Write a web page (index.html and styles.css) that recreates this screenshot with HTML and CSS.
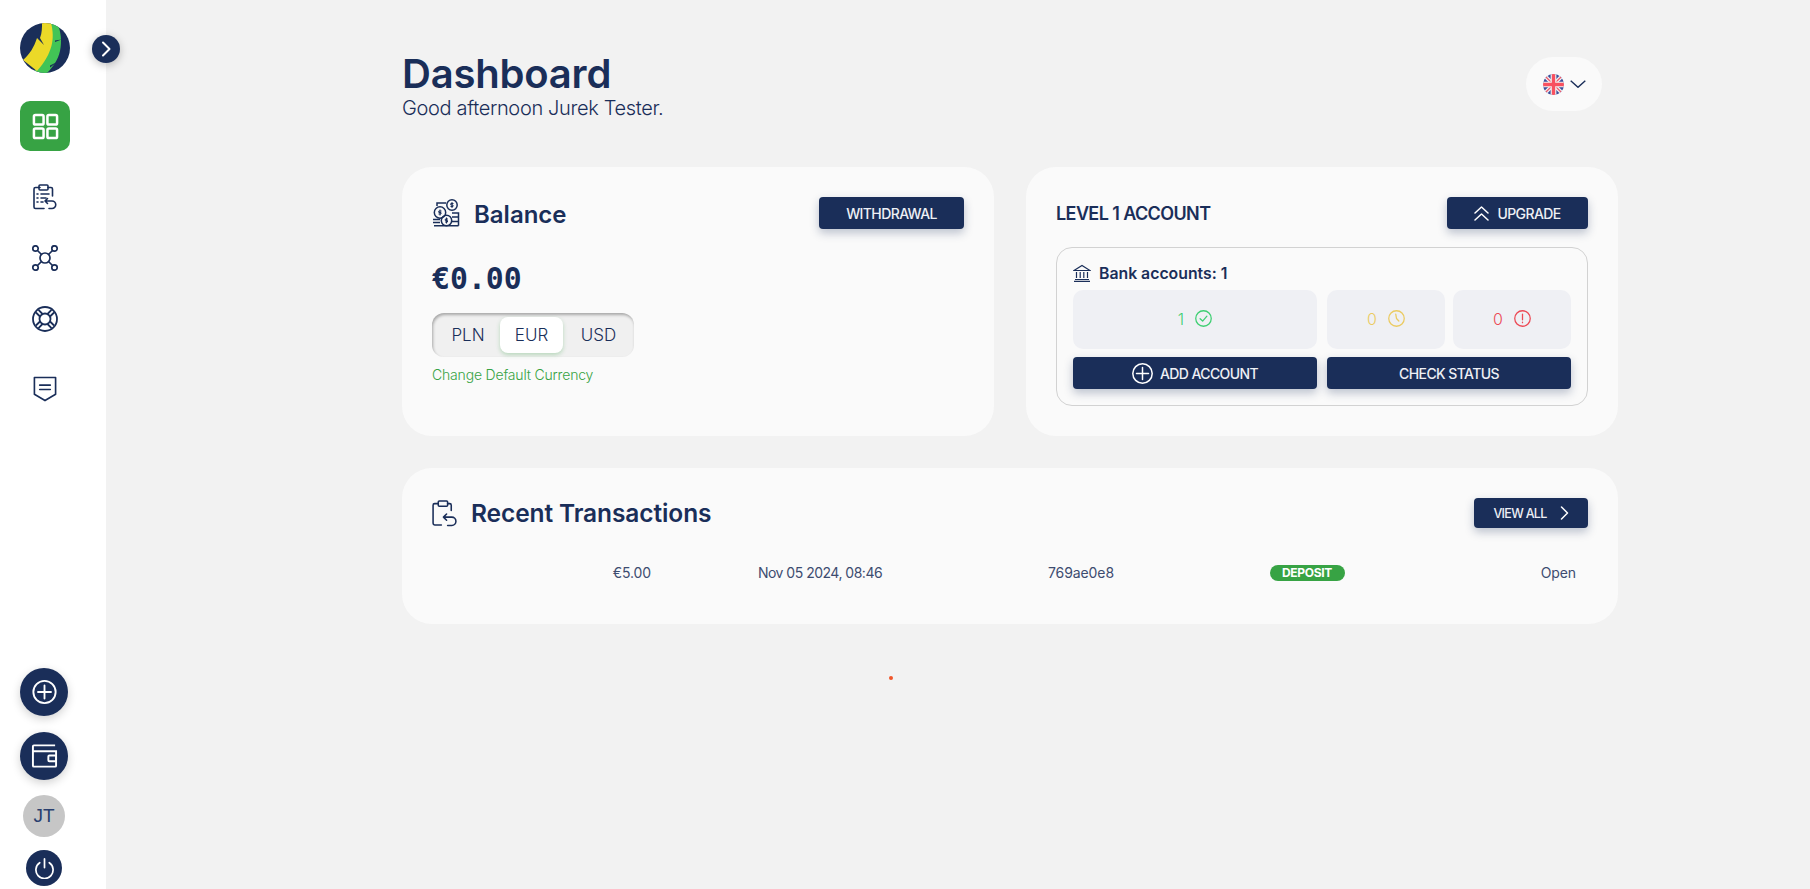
FILE: index.html
```html
<!DOCTYPE html>
<html lang="en">
<head>
<meta charset="utf-8">
<title>Dashboard</title>
<link rel="stylesheet" href="styles.css">
</head>
<body>
<div class="app">
  <aside class="sidebar">
    <svg class="logo" viewBox="0 0 50 50">
      <defs><clipPath id="logoClip"><circle cx="25" cy="25" r="25"/></clipPath></defs>
      <g clip-path="url(#logoClip)">
        <rect width="50" height="50" fill="#1a2e59"/>
        <path d="M30 0H37C41 8 42 18 40 28C38 37 33 44 27 50H14L15 47C25 36 34 22 30 0Z" fill="#42c456"/>
        <path d="M22 0H31C35 15 33 30 17 48L3 37C10 31 14 24 17 15L24 22L20 15C22 10 22 5 22 0Z" fill="#ebd928"/>
        <path d="M35 17.500L41.500 16.500L35 19ZM30 42.500L38 38.500L30 44.500Z" fill="#1a2e59"/>
      </g>
    </svg>
    <button class="toggle" aria-label="Expand">
      <svg viewBox="0 0 28 28" class="toggle-icon"><path d="M11 7.500L17.500 14L11 20.500" fill="none" stroke="#fff" stroke-width="2" stroke-linecap="round" stroke-linejoin="round"/></svg>
    </button>
    <div class="tile">
      <svg viewBox="0 0 28 28" class="tile-icon" fill="none" stroke="#fff" stroke-width="2.600"><rect x="2" y="2" width="10" height="10" rx="1.500"/><rect x="16" y="2" width="10" height="10" rx="1.500"/><rect x="2" y="16" width="10" height="10" rx="1.500"/><rect x="16" y="16" width="10" height="10" rx="1.500"/></svg>
    </div>
    <nav class="nav">
      <div class="nav-item">
        <svg viewBox="0 0 24 26" class="nav-icon" fill="none" stroke="#1a2e59" stroke-width="1.600" stroke-linecap="round" stroke-linejoin="round"><path d="M7 3.500H2.500A1.500 1.500 0 0 0 1 5V23A1.500 1.500 0 0 0 2.500 24.500H11"/><path d="M15 3.500H18A1.500 1.500 0 0 1 19.500 5V12"/><rect x="6" y="1" width="9" height="5" rx="1"/><path d="M8 10H16M8 14H13M8 18H10M4 10H5M4 14H5M4 18H5"/><path d="M14.500 14.500L12 17L14.500 19.500M12 17H19A3.500 3.500 0 0 1 19 24.500H16"/></svg>
      </div>
      <div class="nav-item">
        <svg viewBox="0 0 26 26" class="nav-icon" fill="none" stroke="#1a2e59" stroke-width="1.700"><circle cx="13" cy="13" r="5"/><circle cx="3.500" cy="3.500" r="2.700"/><circle cx="22.500" cy="3.500" r="2.700"/><circle cx="3.500" cy="22.500" r="2.700"/><circle cx="22.500" cy="22.500" r="2.700"/><path d="M5.500 5.500L9.500 9.500M20.500 5.500L16.500 9.500M5.500 20.500L9.500 16.500M20.500 20.500L16.500 16.500"/></svg>
      </div>
      <div class="nav-item">
        <svg viewBox="0 0 26 26" class="nav-icon" fill="none" stroke="#1a2e59" stroke-width="1.800"><circle cx="13" cy="13" r="12"/><circle cx="13" cy="13" r="5.500"/><path d="M3.900 6.500L8.500 11M6.500 3.900L11 8.500M22.100 6.500L17.500 11M19.500 3.900L15 8.500M3.900 19.500L8.500 15M6.500 22.100L11 17.500M22.100 19.500L17.500 15M19.500 22.100L15 17.500"/></svg>
      </div>
      <div class="nav-item nav-item-last">
        <svg viewBox="0 0 24 27" class="nav-icon" fill="none" stroke="#1a2e59" stroke-width="1.700" stroke-linecap="round" stroke-linejoin="round"><path d="M1 1.500H23V19L12 25.500L1 19Z"/><path d="M6.500 9.500H17.500M6.500 14H17.500"/></svg>
      </div>
    </nav>
    <div class="side-bottom">
      <button class="round round-lg" aria-label="Add">
        <svg viewBox="0 0 28 28" class="round-icon" fill="none" stroke="#fff" stroke-width="2" stroke-linecap="round"><circle cx="14" cy="14" r="12"/><path d="M14 7V21M7 14H21"/></svg>
      </button>
      <button class="round round-lg round-wallet" aria-label="Wallet">
        <svg viewBox="0 0 28 26" class="round-icon" fill="none" stroke="#fff" stroke-width="2"><path d="M25 2H3A1 1 0 0 0 2 3V23A1 1 0 0 0 3 24H25A1 1 0 0 0 26 23V8H2"/><rect x="18" y="12.500" width="8" height="6" rx="1"/></svg>
      </button>
      <div class="avatar">JT</div>
      <button class="round round-sm" aria-label="Log out">
        <svg viewBox="0 0 22 22" class="power-icon" fill="none" stroke="#fff" stroke-width="1.800" stroke-linecap="round"><path d="M6 5A9 9 0 1 0 16 5"/><path d="M11 1V10"/></svg>
      </button>
    </div>
  </aside>

  <main class="main">
    <header class="page-head">
      <div>
        <h1 class="title">Dashboard</h1>
        <p class="greeting">Good afternoon Jurek Tester.</p>
      </div>
      <div class="lang">
        <svg viewBox="0 0 22 22" class="flag">
          <defs><clipPath id="flagClip"><circle cx="11" cy="11" r="11"/></clipPath></defs>
          <g clip-path="url(#flagClip)">
            <rect width="22" height="22" fill="#3c4f9c"/>
            <path d="M0 0L22 22M22 0L0 22" stroke="#f0f0f0" stroke-width="4"/>
            <path d="M0 0L22 22M22 0L0 22" stroke="#f0566a" stroke-width="1.300"/>
            <path d="M11 0V22M0 11H22" stroke="#f0f0f0" stroke-width="6"/>
            <path d="M11 0V22M0 11H22" stroke="#f8505f" stroke-width="3.500"/>
          </g>
        </svg>
        <svg viewBox="0 0 16 8" class="lang-chevron"><path d="M.7 .7L8 7.300L15.300 .7" fill="none" stroke="#1a2e59" stroke-width="1.400"/></svg>
      </div>
    </header>

    <section class="cards">
      <article class="card card-balance">
        <div class="card-top">
          <div class="card-title">
            <svg viewBox="0 0 28 28" class="coins" fill="none" stroke="#1a2e59" stroke-width="1.500">
              <path d="M5 7V4H14M1 20.500H8M1 23.500H8M2 26.800H26.500M20 14H26.500V26.800M20 18H26.500M20 22.500H26.500"/>
              <circle cx="20" cy="6" r="5.200"/>
              <circle cx="8" cy="13.500" r="5.700"/>
              <circle cx="14.500" cy="21.500" r="5.200"/>
              <path d="M21.500 4.500H18.800V6H21V7.500H18.500M20 3V9M9.500 12H6.800V13.500H9V15H6.500M8 10.500V16.500M16 20H13.300V21.500H15.500V23H13M14.500 18.500V24.500" stroke-width="1"/>
            </svg>
            <h2 class="h-balance">Balance</h2>
          </div>
          <button class="btn btn-withdraw">WITHDRAWAL</button>
        </div>
        <div class="amount">€0.00</div>
        <div class="segment">
          <span class="seg seg-pln">PLN</span>
          <span class="seg seg-active">EUR</span>
          <span class="seg seg-usd">USD</span>
        </div>
        <a class="change" href="#">Change Default Currency</a>
      </article>

      <article class="card card-level">
        <div class="card-top">
          <h2 class="h-level">LEVEL 1 ACCOUNT</h2>
          <button class="btn btn-upgrade">
            <svg viewBox="0 0 15 15" class="btn-icon" fill="none" stroke="#fff" stroke-width="1.500" stroke-linecap="round" stroke-linejoin="round"><path d="M1 7L7.500 1L14 7M1 14L7.500 8L14 14"/></svg>
            UPGRADE
          </button>
        </div>
        <div class="bank-box">
          <div class="bank-head">
            <svg viewBox="0 0 18 18" class="bank-icon" fill="none" stroke="#1a2e59" stroke-width="1.200"><path d="M1 6.500L9 1.500L17 6.500ZM1 17.400H17M2 15.500H16M3.500 8V14M7.200 8V14M10.800 8V14M14.500 8V14"/></svg>
            <span>Bank accounts: 1</span>
          </div>
          <div class="bank-grid">
            <div class="stat stat-ok">1
              <svg viewBox="0 0 16 16" class="stat-icon" fill="none" stroke="#3ecf72" stroke-width="1.200" stroke-linecap="round" stroke-linejoin="round"><circle cx="8" cy="8" r="7.300"/><path d="M4.800 8.200L7.200 10.400L11.200 5.800"/></svg>
            </div>
            <div class="stat-pair">
              <div class="stat stat-wait">0
                <svg viewBox="0 0 16 16" class="stat-icon" fill="none" stroke="#ebcb62" stroke-width="1.200" stroke-linecap="round" stroke-linejoin="round"><circle cx="8" cy="8" r="7.300"/><path d="M7.300 3.800L8 8L10.200 10.400"/></svg>
              </div>
              <div class="stat stat-bad">0
                <svg viewBox="0 0 16 16" class="stat-icon" fill="none" stroke="#ec4a55" stroke-width="1.200" stroke-linecap="round"><circle cx="8" cy="8" r="7.300"/><path d="M8 3.800V9.200M8 11.500V11.900"/></svg>
              </div>
            </div>
            <button class="btn btn-wide">
              <svg viewBox="0 0 21 21" class="add-icon" fill="none" stroke="#fff" stroke-width="1.500" stroke-linecap="round"><circle cx="10.500" cy="10.500" r="9.700"/><path d="M10.500 4.500V16.500M4.500 10.500H16.500"/></svg>
              ADD ACCOUNT
            </button>
            <button class="btn btn-wide">CHECK STATUS</button>
          </div>
        </div>
      </article>
    </section>

    <section class="card card-tx">
      <div class="card-top card-top-tx">
        <div class="card-title card-title-tx">
          <svg viewBox="0 0 24 26" class="tx-icon" fill="none" stroke="#1a2e59" stroke-width="1.500" stroke-linecap="round" stroke-linejoin="round"><path d="M6 3.500H2.500A1.500 1.500 0 0 0 1 5V22.500A1.500 1.500 0 0 0 2.500 24H9"/><path d="M15 3.500H17A1.500 1.500 0 0 1 18.500 5V10"/><rect x="6" y="1" width="9" height="5" rx="1"/><path d="M14 13.500L11 16.500L14 19.500M11 16.500H19A4 4 0 0 1 19 24.500H15"/></svg>
          <h2 class="h-tx">Recent Transactions</h2>
        </div>
        <button class="btn btn-view">VIEW ALL
          <svg viewBox="0 0 9 14" class="view-icon"><path d="M1.500 1L7.500 7L1.500 13" fill="none" stroke="#fff" stroke-width="1.500" stroke-linecap="round" stroke-linejoin="round"/></svg>
        </button>
      </div>
      <div class="tx-row">
        <span class="tx-amount">€5.00</span>
        <span class="tx-center tx-date">Nov 05 2024, 08:46</span>
        <span class="tx-center">769ae0e8</span>
        <span class="tx-center"><span class="badge">DEPOSIT</span></span>
        <span class="tx-open">Open</span>
      </div>
    </section>

    <span class="dot"></span>
  </main>
</div>
</body>
</html>
```

FILE: styles.css
```css
* { box-sizing: border-box; }

html, body {
  margin: 0;
  height: 100%;
  overflow: hidden;
}

body {
  background: #f2f2f2;
  color: #1a2e59;
  font-family: "Inter", "Noto Sans", sans-serif;
}

h1, h2, p { margin: 0; }

button {
  font-family: inherit;
  border: 0;
  padding: 0;
  cursor: pointer;
}

.app {
  display: flex;
  height: 889px;
}

/* Sidebar */
.sidebar {
  position: relative;
  flex: 0 0 106px;
  height: 889px;
  background: #fff;
  padding: 23px 0 3px 20px;
  display: flex;
  flex-direction: column;
}

.logo {
  display: block;
  width: 50px;
  height: 50px;
  margin-bottom: 28px;
}

.toggle {
  position: absolute;
  left: 92px;
  top: 35px;
  width: 28px;
  height: 28px;
  border-radius: 50%;
  background: #1a2e59;
  box-shadow: 0 2px 8px rgba(0, 0, 0, .25);
  display: flex;
}

.toggle-icon { width: 28px; height: 28px; }

.tile {
  width: 50px;
  height: 50px;
  border-radius: 10px;
  background: #37a344;
  display: flex;
  align-items: center;
  justify-content: center;
}

.tile-icon { width: 27px; height: 27px; }

.nav {
  display: flex;
  flex-direction: column;
  margin-top: 15px;
  width: 50px;
}

.nav-item {
  height: 61px;
  display: flex;
  align-items: center;
  justify-content: center;
}

.nav-item-last { margin-top: 9px; }

.nav-icon { width: 26px; height: 26px; }

.side-bottom {
  margin-top: auto;
  width: 48px;
  display: flex;
  flex-direction: column;
  align-items: center;
}

.round {
  border-radius: 50%;
  background: #1a2e59;
  display: flex;
  align-items: center;
  justify-content: center;
  flex: none;
}

.round-lg {
  width: 48px;
  height: 48px;
  box-shadow: 0 3px 10px rgba(0, 0, 0, .18);
}

.round-wallet { margin-top: 16px; }

.round-icon { width: 27px; height: 26px; }

.avatar {
  width: 42px;
  height: 42px;
  margin-top: 15px;
  border-radius: 50%;
  background: #c6c6c6;
  display: flex;
  align-items: center;
  justify-content: center;
  font-family: "Liberation Sans", sans-serif;
  font-size: 19px;
  color: #2a3f6e;
}

.round-sm {
  width: 36px;
  height: 36px;
  margin-top: 13px;
}

.power-icon { width: 21px; height: 21px; }

/* Main */
.main {
  position: relative;
  flex: 1;
  padding: 0 192px 0 296px;
}

.page-head {
  height: 167px;
  padding: 50px 16px 0 0;
  display: flex;
  justify-content: space-between;
  align-items: flex-start;
}

.title {
  font-size: 40px;
  line-height: 47px;
  font-weight: 600;
  letter-spacing: -.2px;
}

.greeting {
  font-size: 20px;
  line-height: 23px;
  font-weight: 300;
  letter-spacing: -.35px;
  color: #1a2e59;
}

.lang {
  width: 76px;
  height: 54px;
  margin-top: 7px;
  border-radius: 27px;
  background: #fafafa;
  display: flex;
  align-items: center;
  padding-left: 17px;
  gap: 6px;
}

.flag { width: 21px; height: 21px; flex: none; }

.lang-chevron { width: 16px; height: 8px; flex: none; }

.cards {
  display: grid;
  grid-template-columns: 592px 592px;
  gap: 32px;
}

.card {
  background: #fafafa;
  border-radius: 30px;
}

.card-balance,
.card-level {
  height: 269px;
  padding: 30px;
}

.card-top {
  display: flex;
  justify-content: space-between;
  align-items: center;
  height: 32px;
}

.card-title {
  display: flex;
  align-items: center;
  gap: 14px;
}

.coins { width: 28px; height: 28px; }

.h-balance {
  font-size: 24px;
  line-height: 30px;
  padding-top: 4px;
  font-weight: 600;
}

.btn {
  height: 32px;
  border-radius: 4px;
  background: #1a2e59;
  color: #eef0f5;
  font-size: 14px;
  font-weight: 500;
  letter-spacing: -.6px;
  box-shadow: 0 4px 10px rgba(26, 46, 89, .28);
  display: flex;
  align-items: center;
  justify-content: center;
}

.btn-withdraw { width: 145px; }

.btn-upgrade { width: 141px; gap: 8px; }

.btn-icon { width: 15px; height: 15px; }

.amount {
  margin-top: 31px;
  height: 38px;
  line-height: 38px;
  font-family: "DejaVu Sans Mono", "Liberation Mono", monospace;
  font-weight: 700;
  font-size: 29.800px;
}

.segment {
  margin-top: 15px;
  width: 202px;
  height: 44px;
  border-radius: 12px;
  background: #f0f0f0;
  box-shadow: inset 1px 2px 3px rgba(0, 0, 0, .3);
  display: flex;
  align-items: center;
  padding-left: 4px;
  font-size: 17px;
  color: #1a2e59;
}

.seg {
  display: flex;
  align-items: center;
  justify-content: center;
  height: 36px;
  font-weight: 300;
}

.seg-pln { width: 64px; }

.seg-active {
  width: 63px;
  border-radius: 8px;
  background: #fff;
  box-shadow: 0 2px 4px rgba(55, 163, 68, .3);
}

.seg-usd { width: 71px; }

.change {
  display: block;
  margin-top: 9px;
  font-size: 14px;
  line-height: 18px;
  font-weight: 300;
  letter-spacing: -.18px;
  color: #37a344;
  text-decoration: none;
}

.h-level {
  font-size: 18px;
  font-weight: 600;
  letter-spacing: -.6px;
}

.bank-box {
  margin-top: 18px;
  height: 159px;
  border: 1px solid #d2d2d2;
  border-radius: 16px;
  padding: 16px;
}

.bank-head {
  display: flex;
  align-items: center;
  gap: 8px;
  height: 18px;
  font-size: 15.800px;
  font-weight: 600;
}

.bank-icon { width: 18px; height: 18px; }

.bank-grid {
  display: grid;
  grid-template-columns: 244px 244px;
  grid-template-rows: 59px 32px;
  column-gap: 10px;
  row-gap: 8px;
  margin-top: 8px;
}

.stat-pair {
  display: grid;
  grid-template-columns: 118px 118px;
  gap: 8px;
}

.stat {
  border-radius: 10px;
  background: #eff0f4;
  display: flex;
  align-items: center;
  justify-content: center;
  gap: 11px;
  font-size: 16px;
  font-weight: 300;
  padding-bottom: 2px;
}

.stat-icon { width: 17px; height: 17px; }

.stat-ok { color: #3ecf72; }
.stat-wait { color: #ebcb62; }
.stat-bad { color: #ec4a55; }

.btn-wide {
  width: 244px;
  gap: 7px;
}

.add-icon { width: 21px; height: 21px; }

.card-tx {
  height: 156px;
  margin-top: 32px;
  padding: 29px 30px 0;
}

.card-top-tx { height: 32px; }

.card-title-tx { gap: 14px; }

.tx-icon { width: 25px; height: 27px; margin-top: 1px; }

.h-tx {
  font-size: 24.500px;
  font-weight: 600;
  letter-spacing: -.1px;
}

.btn-view {
  width: 114px;
  height: 30px;
  font-size: 12.500px;
  gap: 13px;
  letter-spacing: -.7px;
}

.view-icon { width: 9px; height: 14px; }

.tx-row {
  display: grid;
  grid-template-columns: 219px 338px 184px 268px 135px;
  align-items: center;
  height: 18px;
  margin-top: 34px;
  font-size: 14px;
  color: #3d4c70;
  font-weight: 400;
  letter-spacing: -.1px;
}

.tx-amount { text-align: right; }
.tx-center { text-align: center; }
.tx-date { letter-spacing: -.5px; }
.tx-open { text-align: right; }

.badge {
  display: inline-block;
  width: 75px;
  height: 16px;
  line-height: 16px;
  border-radius: 8px;
  background: #37a344;
  color: #fff;
  font-size: 12px;
  font-weight: 700;
  letter-spacing: -.3px;
  text-align: center;
  vertical-align: middle;
}

.dot {
  position: absolute;
  left: 783px;
  top: 676px;
  width: 4px;
  height: 4px;
  border-radius: 50%;
  background: #f0562a;
}
```
